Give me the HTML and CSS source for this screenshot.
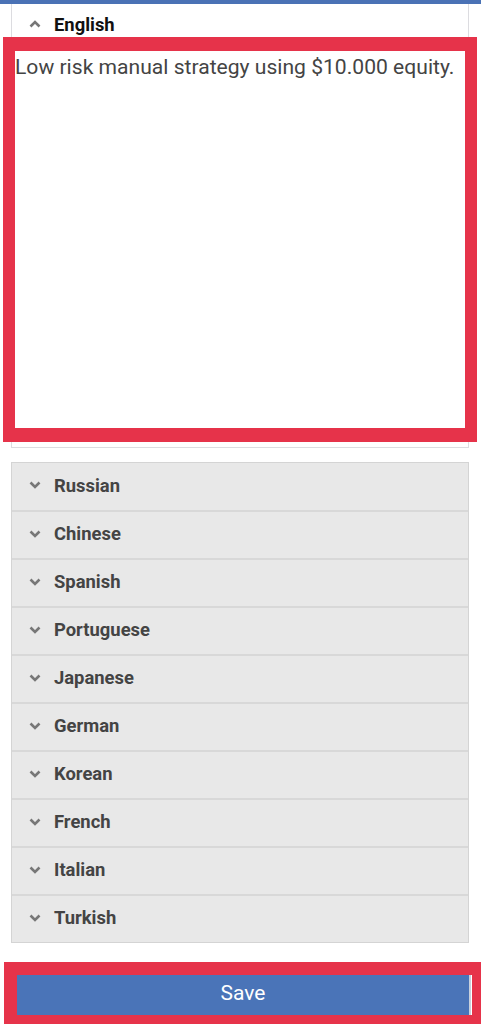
FILE: index.html
```html
<!DOCTYPE html>
<html>
<head>
<meta charset="utf-8">
<link rel="stylesheet" href="styles.css">
</head>
<body>
<div class="topbar"></div>
<div class="panel">
  <div class="panel-head">
    <svg class="chev" width="12" height="8" viewBox="0 0 12 8"><path d="M1.5 6.5 L6 2 L10.5 6.5" fill="none" stroke="#777" stroke-width="2.6"/></svg>
    <span class="head-title">English</span>
  </div>
  <div class="panel-body">
    <p class="desc">Low risk manual strategy using $10.000 equity.</p>
  </div>
</div>
<div class="langs">
  <div class="lang"><svg class="chev" width="12" height="8" viewBox="0 0 12 8"><path d="M1.5 1.5 L6 6 L10.5 1.5" fill="none" stroke="#777" stroke-width="2.6"/></svg><span>Russian</span></div>
  <div class="lang"><svg class="chev" width="12" height="8" viewBox="0 0 12 8"><path d="M1.5 1.5 L6 6 L10.5 1.5" fill="none" stroke="#777" stroke-width="2.6"/></svg><span>Chinese</span></div>
  <div class="lang"><svg class="chev" width="12" height="8" viewBox="0 0 12 8"><path d="M1.5 1.5 L6 6 L10.5 1.5" fill="none" stroke="#777" stroke-width="2.6"/></svg><span>Spanish</span></div>
  <div class="lang"><svg class="chev" width="12" height="8" viewBox="0 0 12 8"><path d="M1.5 1.5 L6 6 L10.5 1.5" fill="none" stroke="#777" stroke-width="2.6"/></svg><span>Portuguese</span></div>
  <div class="lang"><svg class="chev" width="12" height="8" viewBox="0 0 12 8"><path d="M1.5 1.5 L6 6 L10.5 1.5" fill="none" stroke="#777" stroke-width="2.6"/></svg><span>Japanese</span></div>
  <div class="lang"><svg class="chev" width="12" height="8" viewBox="0 0 12 8"><path d="M1.5 1.5 L6 6 L10.5 1.5" fill="none" stroke="#777" stroke-width="2.6"/></svg><span>German</span></div>
  <div class="lang"><svg class="chev" width="12" height="8" viewBox="0 0 12 8"><path d="M1.5 1.5 L6 6 L10.5 1.5" fill="none" stroke="#777" stroke-width="2.6"/></svg><span>Korean</span></div>
  <div class="lang"><svg class="chev" width="12" height="8" viewBox="0 0 12 8"><path d="M1.5 1.5 L6 6 L10.5 1.5" fill="none" stroke="#777" stroke-width="2.6"/></svg><span>French</span></div>
  <div class="lang"><svg class="chev" width="12" height="8" viewBox="0 0 12 8"><path d="M1.5 1.5 L6 6 L10.5 1.5" fill="none" stroke="#777" stroke-width="2.6"/></svg><span>Italian</span></div>
  <div class="lang"><svg class="chev" width="12" height="8" viewBox="0 0 12 8"><path d="M1.5 1.5 L6 6 L10.5 1.5" fill="none" stroke="#777" stroke-width="2.6"/></svg><span>Turkish</span></div>
</div>
<div class="actions">
  <button class="save">Save</button>
</div>
<div class="mark mark-text"></div>
<div class="mark mark-save"></div>
</body>
</html>
```
FILE: styles.css
```css
html, body {
  margin: 0;
  padding: 0;
  background: #fff;
  font-family: Roboto, "Liberation Sans", sans-serif;
  overflow: hidden;
}
body {
  position: relative;
  width: 481px;
  height: 1024px;
}
.topbar {
  height: 4px;
  background: #4a72b5;
}
.panel {
  margin: 0 12px 0 11px;
  border: 1px solid #dcdce0;
  border-top: none;
}
.panel-head {
  height: 40px;
  display: flex;
  align-items: center;
  padding-left: 17px;
}
.chev {
  display: block;
  flex: none;
}
.head-title {
  margin-left: 13px;
  font-weight: 700;
  font-size: 18.4px;
  color: #111;
}
.panel-body {
  height: 403px;
}
.desc {
  margin: 0;
  padding: 10px 0 0 3px;
  font-size: 21.1px;
  color: #444;
  white-space: nowrap;
}
.langs {
  margin: 14px 12px 0 11px;
  border: 1px solid #d4d4d4;
  background: #e8e8e8;
}
.lang {
  height: 43px;
  padding-bottom: 3px;
  display: flex;
  align-items: center;
  padding-left: 17px;
  border-top: 2px solid #d8d8d8;
}
.lang:first-child {
  border-top: none;
  height: 44px;
}
.lang span {
  margin-left: 13px;
  font-weight: 700;
  font-size: 18.4px;
  color: #444;
}
.actions {
  margin-top: 32px;
  padding-left: 17px;
}
.save {
  display: block;
  width: 454px;
  height: 40px;
  border: none;
  border-right: 2px solid #c8d0dc;
  background: #4a74b8;
  color: #fff;
  font-family: Roboto, "Liberation Sans", sans-serif;
  font-size: 21px;
  padding: 0 0 4px;
}
.mark {
  position: absolute;
  box-sizing: border-box;
  border-style: solid;
  border-color: #e6334a;
}
.mark-text {
  left: 3px;
  top: 37px;
  width: 474px;
  height: 405px;
  border-width: 14px 12px;
}
.mark-save {
  left: 4px;
  top: 962px;
  width: 481px;
  height: 66px;
  border-width: 13px;
}
```
